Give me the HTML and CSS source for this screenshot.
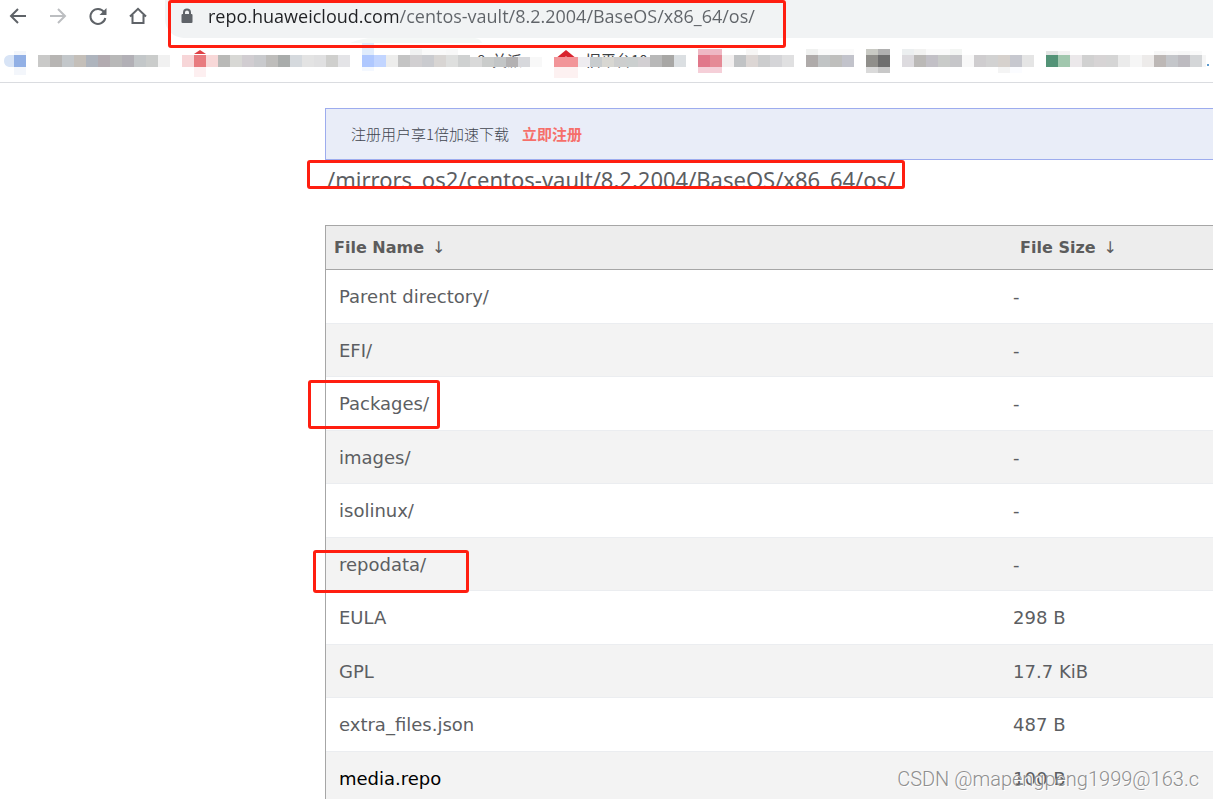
FILE: index.html
```html
<!DOCTYPE html>
<html lang="zh">
<head>
    <meta charset="UTF-8">
    <meta name="viewport" content="width=device-width, initial-scale=1.0">
    <title>/mirrors_os2/centos-vault/8.2.2004/BaseOS/x86_64/os/</title>
    <link rel="stylesheet" href="styles.css">
</head>
<body>
    <header class="toolbar">
        <div class="nav">
            <button class="nav-btn" aria-label="Back">
                <svg width="20" height="20" viewBox="0 0 20 20"><path d="M18 10H3M10 3L3 10L10 17"/></svg>
            </button>
            <button class="nav-btn off" aria-label="Forward">
                <svg width="20" height="20" viewBox="0 0 20 20"><path d="M2 10H17M10 3L17 10L10 17"/></svg>
            </button>
            <button class="nav-btn" aria-label="Reload">
                <svg width="20" height="20" viewBox="0 0 20 20"><path d="M16 6A7.500 7.500 0 1 0 17.300 12"/><path class="solid" d="M18.500 2V9H11.500z"/></svg>
            </button>
            <button class="nav-btn" aria-label="Home">
                <svg width="20" height="20" viewBox="0 0 20 20"><path d="M2 10.500L10 2.800L18 10.500M4.500 9V17H15.500V9"/></svg>
            </button>
        </div>
        <div class="address">
            <svg class="lock" width="12" height="16" viewBox="0 0 12 16"><path d="M3 7V4.500A3 3 0 0 1 9 4.500V7"/><rect x="0.500" y="6" width="11" height="9" rx="1"/></svg>
            <input class="url" type="text" aria-label="Address" value="repo.huaweicloud.com/centos-vault/8.2.2004/BaseOS/x86_64/os/">
        </div>
        <div class="mark mark-url"></div>
    </header>
    <div class="bookmarks">
        <svg width="1213" height="44" viewBox="0 38 1213 44">
            <path fill="#f5f8f7" d="M350 43Q362 38 374 38H475Q481 39 482 43z"/>
            <path fill="#d8e4f6" d="M14 55H9Q4 56 4 61Q4 66 9 67H14z"/>
            <path fill="#e04045" d="M194 54L200 50L206 54z"/>
            <path fill="#d9232e" d="M555 59L566 50L577 59z"/>
            <path fill="#fff" d="M562 59Q566 54 570 59z"/>
            <text x="477" y="66">8&#160; 关派</text>
            <text x="586" y="66">旧平台10</text>
            <g class="cells"></g>
        </svg>
    </div>
    <main class="page">
        <div class="notice">注册用户享1倍加速下载<a href="#">立即注册</a></div>
        <div class="path">
            <h1>/mirrors_os2/centos-vault/8.2.2004/BaseOS/x86_64/os/</h1>
            <div class="mark mark-path"></div>
        </div>
        <table class="list">
            <thead>
                <tr><th>File Name<a href="#">↓</a></th><th>File Size<a href="#">↓</a></th></tr>
            </thead>
            <tbody>
                <tr><td><a href="#">Parent directory/</a></td><td>-</td></tr>
                <tr><td><a href="#">EFI/</a></td><td>-</td></tr>
                <tr><td><a href="#">Packages/</a><div class="mark mark-packages"></div></td><td>-</td></tr>
                <tr><td><a href="#">images/</a></td><td>-</td></tr>
                <tr><td><a href="#">isolinux/</a></td><td>-</td></tr>
                <tr><td><a href="#">repodata/</a><div class="mark mark-repodata"></div></td><td>-</td></tr>
                <tr><td><a href="#">EULA</a></td><td>298 B</td></tr>
                <tr><td><a href="#">GPL</a></td><td>17.7 KiB</td></tr>
                <tr><td><a href="#">extra_files.json</a></td><td>487 B</td></tr>
                <tr class="active"><td><a href="#">media.repo</a></td><td>100 B</td></tr>
            </tbody>
        </table>
    </main>
    <div class="watermark">CSDN @mapengpeng1999@163.c</div>
    <script>
        // mosaic over the bookmarks: [x, y, height, colours of the 12px cells]
        let runs = [
            [14, 51, 24, "#f3f6fb"],
            [14, 55, 12, "#92b0e5"],
            [38, 55, 12, "#c9c9c8 #b7b5b3 #c3c7ca #c4bfb9 #aeb4bd #b2abb0 #b8b8b8 #b2b0b6 #c3c7c9 #cacccb #f1f1f1"],
            [194, 67, 10, "#fdeff0"],
            [182, 55, 12, "#f7d6d8 #e87b7f #f8d8d8 #b9b9b7 #d8d8d5 #d1cdd1 #c9cacd #bebdbb #a9acab #d5d9dd #e3e3e3 #e0e0e1 #cfcfcd #e4e4e7"],
            [362, 43, 12, "#e0ecfc"],
            [362, 67, 4, "#f4f8ff"],
            [410, 49, 6, "#f1f2f2 #fafafa #fafafa #f8f8f8"],
            [362, 55, 12, "#afc8ff #c2d5ff #ededec #c4c4c4 #d1cfd1 #cacbcf #d8d5d3 #dedfde #cfd1d1"],
            [470, 57, 10, "#d9d9d9 #cacccb #c2c5c6 #b3b1b2 #d7d8dc #f8f8f8"],
            [554, 67, 11, "#fdf1f1 #fdf1f1"],
            [554, 57, 10, "#f29599 #f29599 #eeecf0 #c8ccce #d8d7d2 #cdcece #cbcfcf #d2cfd2"],
            [650, 55, 12, "#b8b8b8 #a8a7a5 #dbdfe2"],
            [698, 49, 6, "#eeb8c4 #eeb8c4"],
            [698, 67, 6, "#f5cfd8 #f5cfd8"],
            [698, 55, 12, "#e1778a #e58a96 #f2efef #c1c3c5 #dcd6d4 #cccdce #d5d5d8 #e0e0e1"],
            [746, 49, 6, "#f7f6f5"],
            [806, 49, 6, "#f0f1f0 #fafafa #fafafa #fafafa"],
            [806, 55, 12, "#afabaa #c1c4c5 #bfbfbd #c2c3cb"],
            [866, 49, 6, "#c9cac4 #b0b0b0"],
            [866, 55, 12, "#908f8b #6e6e6e"],
            [866, 67, 6, "#dadada #c8c8c8"],
            [902, 49, 6, "#eceff0 #f2f2f1 #fafafa #fafafa #f3f5f3"],
            [902, 55, 12, "#dddbdf #bbb9b7 #c2c0c6 #c9cbc9 #c6c6c9 #f8f8f8 #cfcdcf #d2d2d2 #d6d1cd #c7c8cf #e5e5e5"],
            [998, 67, 6, "#f4f4f4 #fbfcff"],
            [1046, 51, 4, "#e3e5e4 #f3f3f3"],
            [1046, 55, 12, "#539377 #a1c7ae #ebe8ea #d1d1d1 #d7d4d5 #d5d5d5 #ebebeb #f6f6f6 #edebea #bdb8b6 #c4c6ca #bdbbc0 #d4d6d8"],
            [1154, 51, 4, "#f7f7f7 #f9f9f9 #f7f7f7 #fafafa"]
        ];
        let cells = document.querySelector(".cells");
        function addRect(x, y, w, h, color){
            let rect = document.createElementNS("http://www.w3.org/2000/svg", "rect");
            rect.setAttribute("x", x);
            rect.setAttribute("y", y);
            rect.setAttribute("width", w);
            rect.setAttribute("height", h);
            rect.setAttribute("fill", color);
            cells.appendChild(rect);
        }
        runs.forEach(([x, y, h, colors]) => {
            colors.split(" ").forEach((color, i) => {
                addRect(x + i * 12, y, 12, h, color);
            });
        });
        addRect(1202, 55, 4, 12, "#f6f6f6");
        addRect(1207, 64, 2, 2, "#5b9bd0");
    </script>
</body>
</html>
```
FILE: styles.css
```css
body{
    margin: 0;
    height: 100vh;
    overflow: hidden;
    background-color: #fff;
    color: #5c5e62;
    font-family: "DejaVu Sans", "Noto Sans CJK SC", sans-serif;
    font-size: 18px;
}
a{
    color: inherit;
    text-decoration: none;
}
.toolbar{
    position: relative;
    display: flex;
    height: 38px;
}
.nav{
    display: flex;
    gap: 20px;
    width: 165px;
    height: 32px;
    padding-left: 8px;
    box-sizing: border-box;
    flex: none;
}
.nav-btn{
    width: 20px;
    padding: 0;
    border: none;
    background: none;
}
.nav-btn svg{
    display: block;
    fill: none;
    stroke: #5f6368;
    stroke-width: 2;
}
.nav-btn .solid{
    fill: #5f6368;
    stroke: none;
}
.off svg{
    stroke: #bcbec1;
}
.address{
    flex: 1;
    display: flex;
    align-items: center;
    gap: 15px;
    padding: 0 0 6px 16px;
    background-color: #f1f3f4;
    border-radius: 0 0 0 19px;
}
.lock{
    flex: none;
    fill: #5f6368;
}
.lock path{
    fill: none;
    stroke: #5f6368;
    stroke-width: 2;
}
/* host dark, path grey */
.url{
    flex: 1;
    min-width: 0;
    height: 32px;
    padding: 0;
    border: none;
    outline: none;
    font-family: "Open Sans", sans-serif;
    font-size: 18px;
    color: transparent;
    background: linear-gradient(to right, #202124 190px, #5f6368 190px);
    background-clip: text;
    -webkit-background-clip: text;
}
.bookmarks{
    height: 44px;
    overflow: hidden;
    border-bottom: 1px solid #dadce0;
}
.bookmarks svg{
    display: block;
}
.bookmarks text{
    font-family: "Noto Sans CJK SC", sans-serif;
    font-size: 15px;
    fill: #3c4043;
}
.page{
    padding: 25px 0 0 325px;
}
.notice{
    height: 50px;
    line-height: 50px;
    padding-left: 25px;
    border: 1px solid #9dacee;
    border-right: none;
    background-color: #e9edf8;
    color: #41454f;
    font-family: "Noto Sans CJK SC", sans-serif;
    font-size: 15px;
    font-weight: 300;
}
.notice a{
    margin-left: 13px;
    color: #f66f6a;
    font-weight: bold;
}
.path{
    position: relative;
    height: 65px;
}
.path h1{
    margin: 0;
    padding-left: 2px;
    line-height: 38px;
    font-family: "Noto Sans", sans-serif;
    font-size: 22px;
    font-weight: normal;
}
.list{
    width: 100%;
    table-layout: fixed;
    border-collapse: separate;
    border-spacing: 0;
    border-left: 1px solid #a6a6a6;
}
.list th{
    width: 76%;
    height: 45px;
    box-sizing: border-box;
    padding: 0 0 0 8px;
    border-top: 1px solid #a6a6a6;
    border-bottom: 1px solid #a6a6a6;
    background-color: #ededed;
    color: #5c5c5c;
    font-size: 16px;
    text-align: left;
}
.list th + th{
    width: 24%;
    padding-left: 20px;
}
.list th a{
    margin-left: 8px;
    font-weight: normal;
}
.list td{
    position: relative;
    height: 54px;
    box-sizing: border-box;
    padding: 0 0 0 13px;
    border-bottom: 1px solid #ebedf0;
}
.list tr:nth-child(even) td{
    height: 53px;
    background-color: #f3f3f3;
}
.list .active td:first-child{
    color: #000;
}
.mark{
    position: absolute;
    box-sizing: border-box;
    border: 3px solid #ff1e10;
    border-radius: 3px;
    pointer-events: none;
    z-index: 1;
}
.mark-url{
    left: 168px;
    top: 0;
    width: 618px;
    height: 48px;
}
.mark-path{
    left: -18px;
    top: 0;
    width: 598px;
    height: 29px;
    /* hides the bottoms of the letters */
    box-shadow: 0 8px 0 #fff;
}
.mark-packages{
    left: -18px;
    top: 3px;
    width: 132px;
    height: 49px;
}
.mark-repodata{
    left: -13px;
    top: 12px;
    width: 156px;
    height: 43px;
}
.watermark{
    position: absolute;
    right: 14px;
    bottom: 8px;
    color: #8f8f8f;
    font-family: Roboto, sans-serif;
    font-size: 20px;
    font-weight: 300;
    line-height: 24px;
    text-shadow: 1px 1px 0 #fff;
}
```
